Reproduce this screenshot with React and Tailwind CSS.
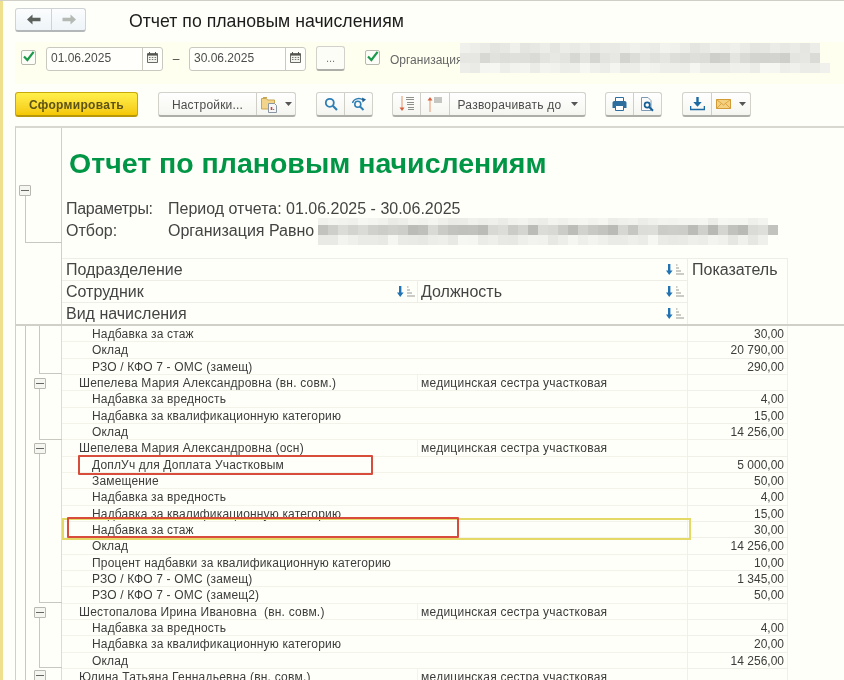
import React from "react";

const rows = [
  ["i", "Надбавка за стаж", "", "30,00"],
  ["i", "Оклад", "", "20 790,00"],
  ["i", "РЗО / КФО 7 - ОМС (замещ)", "", "290,00"],
  ["e", "Шепелева Мария Александровна (вн. совм.)", "медицинская сестра участковая", ""],
  ["i", "Надбавка за вредность", "", "4,00"],
  ["i", "Надбавка за квалификационную категорию", "", "15,00"],
  ["i", "Оклад", "", "14 256,00"],
  ["e", "Шепелева Мария Александровна (осн)", "медицинская сестра участковая", ""],
  ["i", "ДоплУч для Доплата Участковым", "", "5 000,00"],
  ["i", "Замещение", "", "50,00"],
  ["i", "Надбавка за вредность", "", "4,00"],
  ["i", "Надбавка за квалификационную категорию", "", "15,00"],
  ["i", "Надбавка за стаж", "", "30,00"],
  ["i", "Оклад", "", "14 256,00"],
  ["i", "Процент надбавки за квалификационную категорию", "", "10,00"],
  ["i", "РЗО / КФО 7 - ОМС (замещ)", "", "1 345,00"],
  ["i", "РЗО / КФО 7 - ОМС (замещ2)", "", "50,00"],
  ["e", "Шестопалова Ирина Ивановна\u00a0 (вн. совм.)", "медицинская сестра участковая", ""],
  ["i", "Надбавка за вредность", "", "4,00"],
  ["i", "Надбавка за квалификационную категорию", "", "20,00"],
  ["i", "Оклад", "", "14 256,00"],
  ["e", "Юлина Татьяна Геннадьевна (вн. совм.)", "медицинская сестра участковая", ""],
];

function shade(seed, base, spread) {
  const x = Math.sin(seed * 12.9898) * 43758.5453;
  const f = x - Math.floor(x);
  const v = Math.round(base - f * spread);
  return `rgb(${v},${v},${Math.max(v - 4, 0)})`;
}

function Mosaic({ lines, seed }) {
  return (
    <div className="flex flex-col flex-none">
      {lines.map((l, r) => (
        <div key={r} className="flex">
          {Array.from({ length: l.n }).map((_, c) => (
            <div
              key={c}
              style={{
                width: 10,
                height: l.h,
                background: shade(seed + r * 57 + c, l.base, l.spread),
              }}
            />
          ))}
        </div>
      ))}
    </div>
  );
}

function Check() {
  return (
    <div className="w-[15px] h-[15px] flex-none rounded-[2px] border border-[#b9b9b0] bg-[#fdfdf8] flex items-center justify-center">
      <svg width="15" height="15" viewBox="0 0 15 15" className="flex-none -mt-[2px]">
        <path d="M3 7.5 L6.4 11 L12.6 2.8" fill="none" stroke="#1c9a4b" strokeWidth="2.2" />
      </svg>
    </div>
  );
}

function Calendar() {
  return (
    <svg width="11" height="11" viewBox="0 0 11 11" className="-mt-[3px]">
      <path d="M0.5 1.5h10v9h-10z" fill="#f4f4ee" stroke="#6a6a66" />
      <path d="M0.5 2h10v1.6h-10z" fill="#55554f" />
      <path d="M2.5 0v2M8.5 0v2" stroke="#55554f" />
      <path d="M2 5.5h1.5M4.8 5.5h1.5M7.6 5.5h1.5M2 7.5h1.5M4.8 7.5h1.5M7.6 7.5h1.5" stroke="#7a7a74" />
    </svg>
  );
}

function DateField({ value }) {
  return (
    <div className="mt-[5px] flex h-[24px] w-[117px] flex-none rounded-[3px] border border-[#c9c9c0] bg-[#fffffb]">
      <div className="flex-1 pl-[4px] leading-[21px] text-[12px] text-[#4c4c4c]">{value}</div>
      <div className="w-[20px] flex-none border-l border-[#c9c9c0] flex items-center justify-center">
        <Calendar />
      </div>
    </div>
  );
}

function Group({ children, className = "" }) {
  return (
    <div
      className={
        "flex flex-none h-[25px] rounded-[3px] border border-[#d2d2cb] border-b-2 border-b-[#aeaea8] bg-gradient-to-b from-[#ffffff] to-[#f5f5f0] " +
        className
      }
    >
      {children}
    </div>
  );
}

function Cell({ w, children, last }) {
  return (
    <div
      style={{ width: w }}
      className={
        "flex-none flex items-center justify-center text-[12px] text-[#4c4c4c] " +
        (last ? "" : "border-r border-[#cfcfc8]")
      }
    >
      {children}
    </div>
  );
}

function Caret() {
  return (
    <svg width="7" height="4" viewBox="0 0 7 4" className="flex-none">
      <path d="M0 0h7L3.5 4z" fill="#555" />
    </svg>
  );
}

function Sort() {
  return (
    <svg width="20" height="12" viewBox="0 0 20 12" className="flex-none">
      <path d="M3 0h2.4v6.5H7.6L4.2 11 1 6.5h2z" fill="#2273b4" />
      <path d="M11 1h1.5M11 4h3M11 7h5M11 10h8" stroke="#9a9a94" strokeWidth="1.1" />
    </svg>
  );
}

function Search() {
  return (
    <svg width="14" height="14" viewBox="0 0 14 14">
      <circle cx="5.8" cy="5.8" r="4" fill="none" stroke="#2f7fb5" strokeWidth="1.8" />
      <path d="M8.8 8.8L13 13" stroke="#2f7fb5" strokeWidth="2.2" />
    </svg>
  );
}

function SearchNext() {
  return (
    <svg width="16" height="14" viewBox="0 0 16 14">
      <circle cx="6.8" cy="7.3" r="3" fill="none" stroke="#2f7fb5" strokeWidth="1.6" />
      <path d="M9 9.5L12.5 13" stroke="#2f7fb5" strokeWidth="2" />
      <path d="M1.5 6C2.5 2 8 0 12 3" fill="none" stroke="#2f7fb5" strokeWidth="1.4" />
      <path d="M11 0.5L15 2.5 11.5 5.5z" fill="#1f5f90" />
    </svg>
  );
}

function Folder() {
  return (
    <svg width="17" height="17" viewBox="0 0 17 17">
      <path d="M0.5 2.5h5l1 1.5h7v9h-13z" fill="#f2d58b" stroke="#c9a653" />
      <path d="M2 1.5h4" stroke="#c9a653" />
      <path d="M7.5 7.5h6l2 2v7h-8z" fill="#f7f7f7" stroke="#8a97a3" />
      <path d="M10.5 11v3" stroke="#c9443a" strokeWidth="1.6" />
      <path d="M12.5 13v1" stroke="#7a7a7a" strokeWidth="1.4" />
    </svg>
  );
}

function ExpandDown() {
  return (
    <svg width="16" height="16" viewBox="0 0 16 16">
      <path d="M3 0v13" stroke="#eeb093" strokeWidth="1.4" />
      <path d="M0.5 11.5h5L3 15z" fill="#d9603e" />
      <path d="M7 1.5h8M7 3.5h8M8 6.5h7M8 8.5h7M9 11.5h6M9 13.5h6" stroke="#8f8f8a" strokeWidth="1" />
    </svg>
  );
}

function ExpandUp() {
  return (
    <svg width="16" height="16" viewBox="0 0 16 16">
      <path d="M3 3v13" stroke="#eeb093" strokeWidth="1.4" />
      <path d="M0.5 4.5h5L3 1z" fill="#d9603e" />
      <path d="M7 2h8M7 4h8M7 6h8" stroke="#8f8f8a" strokeWidth="1" />
    </svg>
  );
}

function Printer() {
  return (
    <svg width="15" height="14" viewBox="0 0 15 14">
      <path d="M3.5 0.5h8v4h-8z" fill="#fff" stroke="#2e6e9e" />
      <path d="M0.5 6c0-1.2.8-2 2-2h10c1.2 0 2 .8 2 2v5h-14z" fill="#2e6e9e" />
      <path d="M3.5 8.5h8v5h-8z" fill="#fff" stroke="#2e6e9e" />
    </svg>
  );
}

function Preview() {
  return (
    <svg width="15" height="15" viewBox="0 0 15 15">
      <path d="M1.5 0.5h6.5l3 3v10h-9.5z" fill="#fafafa" stroke="#7c9ab3" />
      <circle cx="7.2" cy="8" r="2.6" fill="#fff" stroke="#155f96" strokeWidth="1.7" />
      <path d="M9.2 10L13 13.8" stroke="#155f96" strokeWidth="2" />
    </svg>
  );
}

function Download() {
  return (
    <svg width="15" height="14" viewBox="0 0 15 14">
      <path d="M6.3 0h2.4v5h3L7.5 9.8 3.3 5h3z" fill="#1b6aa3" />
      <path d="M0.5 9v3.5h14V9" fill="none" stroke="#1b6aa3" strokeWidth="1.6" />
    </svg>
  );
}

function Mail() {
  return (
    <svg width="15" height="10" viewBox="0 0 15 10">
      <path d="M0.5 0.5h14v9h-14z" fill="#f5d07f" stroke="#d39b36" />
      <path d="M0.5 0.5L7.5 6l7-5.5M0.5 9.5L5.5 4.5M14.5 9.5L9.5 4.5" fill="none" stroke="#d39b36" strokeWidth="0.8" />
    </svg>
  );
}

function Minus() {
  return (
    <div className="w-[12px] h-[11px] flex-none flex items-center justify-center rounded-[1px] border border-[#b8b8b0] bg-[#f6f6f0]">
      <div className="w-[8px] h-px bg-[#666]" />
    </div>
  );
}

function Tree() {
  const v = (x, y1, y2) => (
    <div key={`v${x}${y1}`} className="absolute w-px bg-[#c8c8c0]" style={{ left: x, top: y1, height: y2 - y1 }} />
  );
  const h = (y) => (
    <div key={`h${y}`} className="absolute h-px bg-[#c8c8c0]" style={{ left: 23, top: y, width: 23 }} />
  );
  const box = (y) => (
    <div key={`b${y}`} className="absolute" style={{ left: 18, top: y }}>
      <Minus />
    </div>
  );
  return (
    <>
      {v(9, 0, 355)}
      {v(23, 0, 47)}
      {h(47)}
      {box(52)}
      {v(23, 63, 113)}
      {h(113)}
      {box(117)}
      {v(23, 128, 276)}
      {h(276)}
      {box(281)}
      {v(23, 292, 341)}
      {h(341)}
      {box(344)}
    </>
  );
}

export default function App() {
  return (
    <div className="relative w-[844px] h-[680px] overflow-hidden bg-[#fffff9] border-t border-[#cfcfc8] font-['Liberation_Sans',Arial,sans-serif] text-[#444] blur-[0.35px]">
      <div className="absolute left-0 top-0 bottom-0 w-[3px] bg-[#eee08c]" />

      <div className="pl-[15px] h-[41px] pt-[7px] flex items-start">
        <div className="flex h-[24px] w-[71px] rounded-[3px] border border-[#cfd3d3] border-b-2 border-b-[#b3b7b7] bg-gradient-to-b from-[#fbfdfe] to-[#eef4f8]">
          <div className="w-[36px] border-r border-[#cfd3d3] flex items-center justify-center">
            <svg width="14" height="11" viewBox="0 0 14 11">
              <path d="M0 5.5L5.5 0.5v3.3H13.5v3.4H5.5v3.3z" fill="#5c615c" />
            </svg>
          </div>
          <div className="flex-1 flex items-center justify-center">
            <svg width="14" height="11" viewBox="0 0 14 11">
              <path d="M14 5.5L8.5 0.5v3.3H0.5v3.4h8v3.3z" fill="#b4b9b4" />
            </svg>
          </div>
        </div>
        <div className="ml-[43px] text-[17.7px] leading-[26px] text-[#1c1c1c]">Отчет по плановым начислениям</div>
      </div>

      <div className="ml-[15px] h-[42px] bg-[#fffff0] flex items-start">
        <div className="ml-[6px] mt-[8px]"><Check /></div>
        <div className="ml-[10px]"><DateField value="01.06.2025" /></div>
        <div className="w-[26px] mt-[8px] text-center text-[12px] text-[#444]">–</div>
        <DateField value="30.06.2025" />
        <div className="ml-[10px] mt-[4px] h-[25px] w-[29px] rounded-[3px] border border-[#d2d2cb] border-b-2 border-b-[#aeaea8] bg-[#fdfdf8] text-[11px] text-[#777] flex items-center justify-center">...</div>
        <div className="ml-[20px] mt-[8px]"><Check /></div>
        <div className="ml-[10px] mt-[9px] w-[70px] flex-none text-[12px] text-[#666] whitespace-nowrap">Организация</div>
        <div className="mt-[1px]">
          <Mosaic
            seed={7}
            lines={[
              { n: 36, h: 10, base: 242, spread: 14 },
              { n: 36, h: 10, base: 232, spread: 28 },
              { n: 37, h: 10, base: 246, spread: 12 },
            ]}
          />
        </div>
      </div>

      <div className="pl-[15px] mt-[8px] h-[34px] flex items-start">
        <div className="h-[25px] w-[123px] flex-none rounded-[3px] border border-[#c9a80c] border-b-2 border-b-[#b8980a] bg-gradient-to-b from-[#fff04a] to-[#f5c800] flex items-center justify-center pt-[1px] text-[12px] tracking-[0.3px] font-bold text-[#5e5316]">
          Сформировать
        </div>
        <Group className="ml-[20px]">
          <Cell w={98}><span className="pt-[1px] tracking-[0.2px]">Настройки...</span></Cell>
          <Cell w={38} last>
            <div className="flex items-center gap-[7px]">
              <Folder />
              <Caret />
            </div>
          </Cell>
        </Group>
        <Group className="ml-[20px]">
          <Cell w={28}><Search /></Cell>
          <Cell w={27} last><SearchNext /></Cell>
        </Group>
        <Group className="ml-[19px]">
          <Cell w={28}><ExpandDown /></Cell>
          <Cell w={29}><ExpandUp /></Cell>
          <Cell w={135} last>
            <div className="flex items-center gap-[9px]">
              <span className="pt-[1px] tracking-[0.25px]">Разворачивать до</span>
              <Caret />
            </div>
          </Cell>
        </Group>
        <Group className="ml-[19px]">
          <Cell w={28}><Printer /></Cell>
          <Cell w={27} last><Preview /></Cell>
        </Group>
        <Group className="ml-[20px]">
          <Cell w={29}><Download /></Cell>
          <Cell w={38} last>
            <div className="flex items-center gap-[8px]">
              <Mail />
              <Caret />
            </div>
          </Cell>
        </Group>
      </div>

      <div className="ml-[15px] border-t-2 border-[#d8d8d0] border-l border-l-[#d0d0c8]">
        <div className="flex h-[196px]">
          <div className="relative w-[46px] flex-none border-r border-[#d0d0c8]">
            <div className="absolute left-[3px] top-[57px]"><Minus /></div>
            <div className="absolute left-[9px] top-[68px] w-px h-[46px] bg-[#c8c8c0]" />
            <div className="absolute left-[9px] top-[114px] w-[37px] h-px bg-[#c8c8c0]" />
          </div>
          <div className="flex-1 min-w-0">
            <div className="pl-[7px] pt-[17px] h-[61px] text-[28.5px] leading-[36px] font-bold text-[#009646]">
              Отчет по плановым начислениям
            </div>
            <div className="mt-[9px] pl-[4px] flex h-[22px] items-center text-[16px] text-[#444]">
              <div className="w-[102px] flex-none tracking-[-0.3px]">Параметры:</div>
              <div>Период отчета: 01.06.2025 - 30.06.2025</div>
            </div>
            <div className="pl-[4px] flex h-[22px] items-center text-[16px] text-[#444]">
              <div className="w-[102px] flex-none">Отбор:</div>
              <div className="w-[150px] flex-none whitespace-nowrap">Организация Равно</div>
              <Mosaic
                seed={23}
                lines={[
                  { n: 45, h: 7, base: 246, spread: 12 },
                  { n: 46, h: 10, base: 222, spread: 38 },
                  { n: 45, h: 10, base: 246, spread: 16 },
                ]}
              />
            </div>
            <div className="mt-[16px] flex w-[726px] border-t border-[#eeeee6]">
              <div className="w-[625px] flex-none">
                <div className="h-[22px] flex items-center justify-between pl-[4px] pr-[2px] border-b border-[#eeeee6] text-[16px] text-[#444]">
                  <span>Подразделение</span>
                  <Sort />
                </div>
                <div className="h-[22px] flex border-b border-[#eeeee6] text-[16px] text-[#444]">
                  <div className="w-[356px] flex-none flex items-center justify-between pl-[4px] pr-[1px] border-r border-[#eeeee6]">
                    <span>Сотрудник</span>
                    <Sort />
                  </div>
                  <div className="flex-1 flex items-center justify-between pl-[3px] pr-[2px]">
                    <span>Должность</span>
                    <Sort />
                  </div>
                </div>
                <div className="h-[21px] flex items-center justify-between pl-[4px] pr-[2px] text-[16px] text-[#444]">
                  <span>Вид начисления</span>
                  <Sort />
                </div>
              </div>
              <div className="flex-1 border-l border-r border-[#eeeee6] pl-[4px] pt-[1px] text-[16px] leading-[20px] text-[#444]">Показатель</div>
            </div>
          </div>
        </div>

        <div className="relative border-t-2 border-[#d0d0c8]">
          <div className="absolute inset-y-0 left-0 w-[47px]">
            <Tree />
          </div>
          {rows.map(([kind, name, pos, val], i) => (
            <div key={i} className="flex h-[16.33px] text-[12px] leading-[17px] text-[#3c3c3c]">
              <div className="w-[46px] flex-none border-r border-[#dcdcd4]" />
              <div className="flex w-[625px] flex-none border-b border-[#f3f3ea]">
                <div className={"w-[356px] flex-none whitespace-pre " + (kind === "e" ? "pl-[17px] border-r border-[#f3f3ea] tracking-[0.22px]" : "pl-[30px] tracking-[0.17px]")}>
                  {name}
                </div>
                <div className="flex-1 pl-[3px] tracking-[0.24px]">{pos}</div>
              </div>
              <div className="w-[101px] flex-none text-right pr-[3px] border-l border-r border-b border-[#f0f0e8]">{val}</div>
            </div>
          ))}
          <div className="absolute left-[46px] top-[192px] w-[629px] h-[22px] border-2 border-[#e4d866]" />
          <div className="absolute left-[62px] top-[129px] w-[295px] h-[20px] border-[2.5px] border-[#d84c3c] rounded-[1px]" />
          <div className="absolute left-[51px] top-[191px] w-[392px] h-[21px] border-[2.5px] border-[#d84c3c] rounded-[1px]" />
        </div>
      </div>
    </div>
  );
}
